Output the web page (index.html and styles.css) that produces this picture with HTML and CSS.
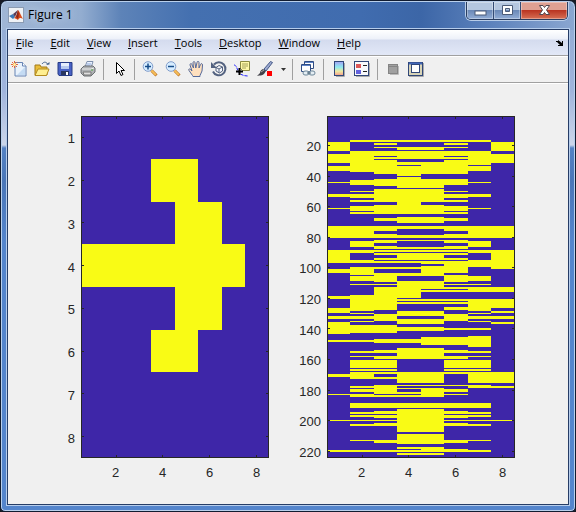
FILE: index.html
```html
<!DOCTYPE html>
<html lang="en">
<head>
<meta charset="utf-8">
<title>Figure 1</title>
<link rel="stylesheet" href="styles.css">
</head>
<body>
<div class="window">
  <header class="titlebar">
    <svg class="app-icon" viewBox="0 0 16 16" aria-hidden="true">
      <rect x=".5" y=".5" width="15" height="15" fill="#eef1f5" stroke="#8b9bb2"/>
      <path d="M1 9l4-2 2 3-2 2z" fill="#3a79b7"/><path d="M5 7c2-1 3-3 5-4l-3 7z" fill="#5a3b55"/>
      <path d="M10 3c2 2 3 6 5 9-3-2-4-1-5 1-1-1-2-1-4-2 3-2 3-5 4-8z" fill="#d94d1d"/><path d="M10 3c1 3 1 6 0 9l-2-2z" fill="#8d2719"/>
    </svg>
    <h1 class="title">Figure 1</h1>
    <div class="controls">
      <button class="control" aria-label="Minimize"><svg viewBox="0 0 13 11"><rect x="1" y="6" width="11" height="4" fill="#fff" stroke="#4b5b78"/></svg></button>
      <button class="control" aria-label="Maximize"><svg viewBox="0 0 13 11"><path d="M1.500 .5h10v9h-10zM4.500 3.500h4v3h-4z" fill="#fff" fill-rule="evenodd" stroke="#4b5b78"/></svg></button>
      <button class="control close" aria-label="Close"><svg viewBox="0 0 13 11"><path d="M1.500 .5h3.500l1.500 2 1.500-2h3.500L8.500 5l3 4.500H8L6.500 7.500 5 9.500H1.500l3-4.500z" fill="#fff" stroke="#53474f"/></svg></button>
    </div>
  </header>
  <main class="client">
    <nav class="menubar">
      <button><u>F</u>ile</button><button><u>E</u>dit</button><button><u>V</u>iew</button><button><u>I</u>nsert</button><button><u>T</u>ools</button><button><u>D</u>esktop</button><button><u>W</u>indow</button><button><u>H</u>elp</button>
      <button class="dock" aria-label="Dock figure"><svg viewBox="0 0 8 6"><path d="M0 1h2v-1l4 3V1h1v5H2V5h2L1 2H0z" fill="#000"/></svg></button>
    </nav>
    <div class="toolbar" role="toolbar">
      <button aria-label="New figure"><svg viewBox="0 0 16 16"><path d="M4 1.500h7.500l3.500 3.500v10H4z" fill="#e9f2fc" stroke="#6784b4"/><path d="M14 6v8H6z" fill="#c4dbf3"/><path d="M11.500 1.500V5H15" fill="#fff" stroke="#6784b4"/><path d="M3.500 0v7M0 3.500h7M1 1l5 5M6 1L1 6" stroke="#e5673b"/><circle cx="3.500" cy="3.500" r="1.500" fill="#fff3a1"/></svg></button>
      <button aria-label="Open"><svg viewBox="0 0 16 16"><path d="M1 14V4h5l1 2h6v8z" fill="#e9bd3a" stroke="#a37a18"/><path d="M1 14.500L4 8h11l-2.500 6.500z" fill="#ffef91" stroke="#b48c20"/><path d="M8 3c2-3 5-2 6 1" fill="none" stroke="#48658e"/><path d="M12 3.500h3.500V1z" fill="#48658e"/></svg></button>
      <button aria-label="Save"><svg viewBox="0 0 16 16"><path d="M1 1.500h14v13H2L1 13z" fill="#4962c5" stroke="#263b85"/><path d="M4 2h8v6H4z" fill="#e6eefc"/><path d="M4 5h8v3H4z" fill="#b7c9ee"/><path d="M4 10h8v4H4z" fill="#29365f"/><path d="M9 11h2v3H9z" fill="#fff"/></svg></button>
      <button aria-label="Print"><svg viewBox="0 0 16 16"><path d="M5 6l2-5.500h6L11 7z" fill="#e9f1ff" stroke="#7d8fac"/><path d="M7 3h4M6 5h4" stroke="#8da9db"/><path d="M1 8l3-3h9l2 2v4l-4 4H4l-3-3z" fill="#aeb1b4" stroke="#6b6f73"/><path d="M2 8h9l3-1" fill="none" stroke="#eee"/><path d="M3 11h8v3H4z" fill="#dedede" stroke="#777"/><path d="M11 9h2" stroke="#54ac45"/></svg></button>
      <span class="sep"></span>
      <button aria-label="Edit plot"><svg viewBox="0 0 16 16"><path d="M5.500 1.500v11L8 10l2 4.500 2-1L10 9.500h3.500z" fill="#fff" stroke="#000"/></svg></button>
      <span class="sep"></span>
      <button aria-label="Zoom in"><svg viewBox="0 0 16 16"><path d="M9.500 9.500l5 5" stroke="#b66b1d" stroke-width="3"/><path d="M9.500 9.500l4.500 4.500" stroke="#f6be58" stroke-width="2"/><circle cx="6" cy="5.500" r="4.800" fill="#d7edff" stroke="#819dcb"/><path d="M3 5.500h6M6 2.500v6" stroke="#164c89" stroke-width="1.500"/></svg></button>
      <button aria-label="Zoom out"><svg viewBox="0 0 16 16"><path d="M9.500 9.500l5 5" stroke="#b66b1d" stroke-width="3"/><path d="M9.500 9.500l4.500 4.500" stroke="#f6be58" stroke-width="2"/><circle cx="6" cy="5.500" r="4.800" fill="#d7edff" stroke="#819dcb"/><path d="M3 5.500h6" stroke="#164c89" stroke-width="1.500"/></svg></button>
      <button aria-label="Pan"><svg viewBox="0 0 16 16"><path d="M4.500 14.500L1 9.500c-1-2 1-2 2-.5l1 1-2-6c0-2 2-2 2 0l1.500 3L5 2c0-2 2-2 2 0l.8 5L9 1.500c0-1.500 2-1.500 2 0V7l1.500-3.500c.5-1.500 2-1 2 .5L14 10l-2 4.500v1H5z" fill="#ffe0be" stroke="#55699a"/></svg></button>
      <button aria-label="Rotate 3D"><svg viewBox="0 0 16 16"><path d="M3 3.500a6.500 6.500 0 1 1-1 7" fill="none" stroke="#536280" stroke-width="2"/><path d="M0 1v6h6z" fill="#536280"/><path d="M5 6.500l3-2 3.500 1.500v4L8.500 12 5 10zM5 6.500L8 8l3.500-2M8 8v4" fill="#f6f8ff" stroke="#536280"/></svg></button>
      <button aria-label="Data cursor"><svg viewBox="0 0 16 16"><path d="M0 4c2 0 3 3 4 6s5 5 10 5" fill="none" stroke="#22f" stroke-dasharray="3 1"/><path d="M6.500.5h9v9h-7l-2-2z" fill="#fff9a8" stroke="#8b8a43"/><path d="M8 3h6M8 5h6M8 7h4" stroke="#a3a05c"/><path d="M5.500 7v7M2 10.500h7" stroke="#000" stroke-width="2"/></svg></button>
      <button aria-label="Brush data"><svg viewBox="0 0 16 16"><path d="M7 8L13.500.5l2 1L9 10z" fill="#9daad0" stroke="#445887"/><path d="M6 8l3 2-2 3c-2 2-4 1-7 2l3-3c0-2 1-3 3-4z" fill="#42424a"/><path d="M4 11l3-2" stroke="#aaa"/><path d="M10 10h5v5h-5z" fill="#f00"/></svg></button>
      <button class="drop" aria-label="Brush options"><svg viewBox="0 0 5 3"><path d="M0 0h5L2.500 3z" fill="#333"/></svg></button>
      <span class="sep"></span>
      <button aria-label="Link plot"><svg viewBox="0 0 16 16"><path d="M4.500.5h9v7h-9z" fill="#fff" stroke="#314d83"/><path d="M5 1.500h8" stroke="#5d83c8"/><path d="M1.500 3.500h9v7h-9z" fill="#fff" stroke="#314d83"/><path d="M2 4.500h8" stroke="#5d83c8"/><rect x="3" y="10" width="6" height="4" rx="2" fill="#e4edf3" stroke="#6d8799"/><rect x="9" y="10" width="6" height="4" rx="2" fill="#e4edf3" stroke="#6d8799"/><path d="M7 12h4" stroke="#466173"/></svg></button>
      <span class="sep"></span>
      <button aria-label="Insert colorbar"><svg viewBox="0 0 16 16"><defs><linearGradient id="cb" x2="0" y2="1"><stop stop-color="#a4a0f3"/><stop offset=".4" stop-color="#8deaf0"/><stop offset=".7" stop-color="#eee9a0"/><stop offset="1" stop-color="#f49b8d"/></linearGradient></defs><path d="M5 15.500h8.500V2" fill="none" stroke="#aaa"/><rect x="3.500" y=".5" width="9" height="14" fill="url(#cb)" stroke="#304779"/></svg></button>
      <button aria-label="Insert legend"><svg viewBox="0 0 16 16"><path d="M2 15.500h13.500V2" fill="none" stroke="#aaa"/><rect x=".5" y=".5" width="14" height="14" fill="#f8f9fb" stroke="#304779"/><path d="M2 3h5v4H2z" fill="#dc5757"/><path d="M2 9h5v4H2z" fill="#6262de"/><path d="M9 4.500h4M9 10.500h4" stroke="#222"/></svg></button>
      <span class="sep"></span>
      <button aria-label="Hide plot tools"><svg viewBox="0 0 16 16"><path d="M5 13.500h8.500V5" fill="none" stroke="#bbb"/><rect x="3.500" y="3.500" width="9" height="9" fill="#a0a0a0" stroke="#858585"/><path d="M3 5.500h10" stroke="#858585"/></svg></button>
      <button aria-label="Show plot tools and dock figure"><svg viewBox="0 0 16 16"><path d="M1 15.500h14.500V2" fill="none" stroke="#aaa"/><rect x=".5" y="1.500" width="14" height="13" fill="#d8d4b8" stroke="#304779"/><path d="M1 2.500h13" stroke="#4267b8" stroke-width="2"/><rect x="3.500" y="3.500" width="8" height="8" fill="#fff" stroke="#304779"/></svg></button>
    </div>
    <section class="figure">
      <div class="axes">
        <div class="ylabels"><span>1</span><span>2</span><span>3</span><span>4</span><span>5</span><span>6</span><span>7</span><span>8</span></div>
        <svg class="plot" id="plot-a" viewBox="0 0 188 342" preserveAspectRatio="none" role="img" aria-label="Pattern over 8 rows"></svg>
        <div class="xlabels"><span>2</span><span>4</span><span>6</span><span>8</span></div>
      </div>
      <div class="axes">
        <div class="ylabels ylabels-long"><span>20</span><span>40</span><span>60</span><span>80</span><span>100</span><span>120</span><span>140</span><span>160</span><span>180</span><span>200</span><span>220</span></div>
        <svg class="plot" id="plot-b" viewBox="0 0 188 342" preserveAspectRatio="none" role="img" aria-label="Pattern over 222 rows"></svg>
        <div class="xlabels"><span>2</span><span>4</span><span>6</span><span>8</span></div>
      </div>
    </section>
  </main>
</div>
<script src="plots.js"></script>
</body>
</html>
```
FILE: plots.js
```js
// Each string lists the "on" intervals of one column as start-end pairs.
const TOP = 116;
const edges = [1, 23, 47, 70, 94, 117, 141, 164, 187];

const left = [
  "244-287", "244-287", "244-287",
  "159-202 244-287 330-372",
  "159-372",
  "202-330",
  "244-287",
  ""
];

const right = [
  "142-151 154-163 166-171 182-183 194-197 208-209 226-238 250-263 269-273 296-299 308-313 316-319 322-334 340-342 374-377 394-395 420-421 450-452",
  "140-142 151-172 180-185 191-192 194-198 200-202 206-211 212-214 226-238 241-247 250-253 260-263 267-275 276-281 284-285 295-311 313-314 316-319 321-322 325-333 340-342 351-353 356-357 360-368 369-371 372-379 386-388 389-392 394-397 403-408 412-414 415-417 420-421 424-426 440-441 450-452",
  "140-142 143-145 147-148 151-156 157-159 160-174 179-186 189-202 205-214 218-221 226-231 234-238 240-243 246-249 250-252 253-255 258-260 261-263 267-269 273-282 284-285 287-310 314-321 325-333 339-343 350-353 356-359 360-368 369-371 372-374 377-379 385-394 395-397 403-408 411-414 415-418 420-421 423-426 440-443 450-452",
  "140-142 147-150 151-159 162-165 166-176 177-188 189-214 217-223 226-229 235-238 240-241 247-249 250-252 253-260 261-263 267-269 273-276 281-298 299-301 302-304 311-316 319-324 327-331 339-343 348-359 372-383 385-386 388-389 392-394 395-397 403-408 409-432 434-444 447-449 450-452 453-455",
  "140-142 147-150 151-159 162-174 179-188 189-202 205-214 217-223 226-229 235-238 240-241 247-249 250-252 253-260 261-264 266-276 281-289 290-292 299-301 302-304 311-316 319-324 327-331 337-345 348-359 372-383 385-386 388-397 403-408 409-432 434-444 447-452 453-455",
  "140-142 143-145 147-148 151-156 157-159 160-174 179-185 191-192 194-198 200-202 206-211 212-214 218-221 226-231 234-238 240-243 246-249 250-252 253-255 258-260 261-273 275-282 284-285 287-289 290-292 299-301 302-304 307-310 314-321 328-330 337-345 350-353 356-359 360-368 369-371 372-374 385-386 389-392 394-395 403-408 411-414 415-418 420-421 423-426 440-443 449-452",
  "140-142 151-165 166-171 182-183 194-197 208-209 226-238 241-247 250-253 260-267 276-281 284-285 287-292 299-311 313-314 316-319 321-322 328-330 336-347 351-353 356-357 360-368 369-371 372-383 385-388 403-408 412-414 415-417 420-421 424-426 440-441 450-452",
  "142-151 154-163 226-238 250-269 287-292 299-308 311-313 316-319 322-324 372-383 386-388 420-421"
];

const xTicks = [35, 81, 128, 175];

function draw(id, columns, yTicks) {
  let cells = "";
  columns.forEach((column, i) => {
    for (const pair of column.split(" ").filter(Boolean)) {
      const [a, b] = pair.split("-").map(Number);
      cells += `M${edges[i]} ${a - TOP}H${edges[i + 1]}V${b - TOP}H${edges[i]}z`;
    }
  });
  let ticks = "";
  for (const x of xTicks) ticks += `M${x} 0h1v3h-1zM${x} 339h1v3h-1z`;
  for (const y of yTicks) ticks += `M0 ${y}h3v1h-3zM185 ${y}h3v1h-3z`;
  document.getElementById(id).innerHTML =
    `<path class="off" d="M0 0h188v342H0z"/><path class="on" d="${cells}"/>` +
    `<path class="axis" d="${ticks}M0 0h188v1H0zM0 341h188v1H0zM0 0h1v342H0zM187 0h1v342h-1z"/>`;
}

draw("plot-a", left, [21, 64, 106, 149, 192, 235, 277, 320]);
draw("plot-b", right, [29, 60, 90, 121, 151, 182, 212, 243, 274, 304, 335]);
```
FILE: styles.css
```css
* { box-sizing: border-box; }
html, body { height: 100%; }
body { margin: 0; background: #171a24; font-family: "Open Sans", "Noto Sans", sans-serif; font-size: 11px; color: #000; }
button { border: 0; padding: 0; margin: 0; background: none; font: inherit; color: inherit; }
svg { display: block; }

.window {
  height: 100vh;
  display: flex;
  flex-direction: column;
  padding: 1px 7px 7px;
  border: 1px solid #111c31;
  border-radius: 7px 7px 5px 5px;
  box-shadow: inset 0 0 0 1px #b9d0ec;
  background:
    linear-gradient(90deg, #a0b6d5 0, #93add0 80px, #5d83b8 120px, #4470b0 190px, #406caf 360px, #3c66a7 420px, #5d82bc 490px, #8ba7d1 100%) top / 100% 29px no-repeat,
    linear-gradient(#8faad2 0, #a0b4dc 90px, #ccd6ea 144px, #5482c4 147px, #4a76b8 180px, #5485cc 240px, #5485cc 100%);
}
.titlebar { display: flex; height: 28px; padding-bottom: 1px; }
.app-icon { width: 16px; height: 16px; margin: 5px 4px 0 0; }
.title { flex: 1; margin: 5px 0 0; font-size: 12px; line-height: 16px; font-weight: 400; text-shadow: 0 0 8px #dbe6f5; }
.controls { display: flex; height: 18px; border: 1px solid #293d60; border-top: 0; border-radius: 0 0 5px 5px; overflow: hidden; box-shadow: 0 0 0 1px #b9cde8; }
.control { display: flex; justify-content: center; align-items: center; width: 26px; background: linear-gradient(#b4c6df 0 45%, #6b89b7 50%, #92add6); box-shadow: inset 0 0 0 1px #ffffff55; }
.control + .control { width: 27px; border-left: 1px solid #344b74; }
.control svg { width: 13px; height: 11px; }
.control + .close { width: 47px; background: linear-gradient(#dfa092 0 45%, #ba3522 50%, #d77055); }

.client { flex: 1; min-height: 0; display: flex; flex-direction: column; background: #f0f0f0; outline: 1px solid #263d66; box-shadow: 0 0 0 2px #b6cdec; }
.menubar { display: flex; align-items: center; gap: 17px; height: 26px; padding: 0 4px 0 8px; background: linear-gradient(#fff, #edf1f9 9px, #d4dbee 10px, #e2e8f7 25px); border-bottom: 1px solid #a0a0a0; line-height: 16px; }
.menubar u { text-underline-offset: 1px; }
.dock { margin-left: auto; }
.dock svg { width: 8px; height: 6px; }
.toolbar { display: flex; align-items: center; height: 27px; border-top: 1px solid #fff; border-bottom: 1px solid #a0a0a0; background: #f0f0f0; }
.toolbar button { padding: 0 4px 2px 3px; }
.toolbar svg { width: 16px; height: 16px; }
.toolbar .drop { padding: 0 3px 0 4px; }
.toolbar .drop svg { width: 5px; height: 3px; }
.sep { width: 8px; height: 21px; border-left: 3px solid transparent; background: linear-gradient(#a0a0a0, #a0a0a0) 0 0 / 1px 100% no-repeat padding-box; }

.figure { flex: 1; min-height: 0; display: flex; padding: 32px 53px 20px 43px; gap: 28px; border-top: 1px solid #fff; color: #262626; font: 13px/16px "Liberation Sans", Arial, sans-serif; }
.axes { flex: 1; display: grid; grid-template-columns: 30px 1fr; grid-template-rows: 1fr 26px; min-height: 0; }
.plot { width: 100%; height: 100%; min-height: 0; shape-rendering: crispEdges; }
.ylabels { display: flex; flex-direction: column; padding: 2px 6px 0 0; margin-bottom: -2px; }
.ylabels span { flex: 1; display: flex; align-items: center; justify-content: flex-end; }
.ylabels-long { padding-top: 16px; margin-bottom: -10px; }
.xlabels { grid-column: 2; display: grid; grid-template-columns: repeat(4, 1fr); padding: 7px 0 0 11px; margin-right: -11px; text-align: center; }
.off { fill: #3e26a8; }
.on { fill: #f9fb15; }
.axis { fill: #262626; }
```
